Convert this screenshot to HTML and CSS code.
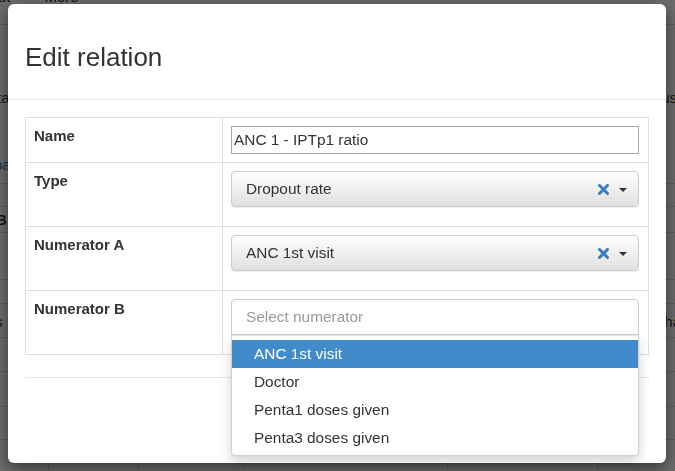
FILE: index.html
```html
<!DOCTYPE html>
<html lang="en">
<head>
<meta charset="utf-8">
<title>Edit relation</title>
<link rel="stylesheet" href="styles.css">
</head>
<body>
<div class="page">
  <div class="bg-row r0"><span class="bg-txt">ut</span><span class="bg-txt more">More</span></div>
  <div class="bg-row r1">
    <div class="bg-line l1"><span class="bg-txt">ta</span><span class="bg-txt">us</span></div>
    <div class="bg-line l2"><span class="bg-txt link">pa</span></div>
  </div>
  <div class="bg-row r2"></div>
  <div class="bg-row r3"><span class="bg-txt bold">B</span></div>
  <div class="bg-row r4"></div>
  <div class="bg-row r5"></div>
  <div class="bg-row r6"><span class="bg-txt">s</span><span class="bg-txt">ha</span></div>
  <div class="bg-row r7"></div>
  <div class="bg-row r8"></div>
  <div class="bg-row r9"></div>
  <div class="bg-row r10"><span class="bg-cell c1"></span><span class="bg-cell c2"></span><span class="bg-cell c3"></span><span class="bg-cell c4"></span><span class="bg-cell c5"></span></div>
</div>
<div class="backdrop"></div>

<div class="modal">
  <div class="modal-header">
    <h4 class="modal-title">Edit relation</h4>
  </div>
  <div class="modal-body">
    <div class="rel-table">
      <div class="cell label">Name</div>
      <div class="cell ctrl"><input class="text-input" type="text" value="ANC 1 - IPTp1 ratio"></div>

      <div class="cell label">Type</div>
      <div class="cell ctrl">
        <div class="select">
          <span class="sel-text">Dropout rate</span>
          <svg class="clear" width="11" height="11" viewBox="0 0 11 11"><path d="M1.5 1.5 L9.5 9.5 M9.5 1.5 L1.5 9.5" stroke="#3b7dc4" stroke-width="3" stroke-linecap="square" fill="none"/></svg>
          <span class="caret"></span>
        </div>
      </div>

      <div class="cell label">Numerator A</div>
      <div class="cell ctrl">
        <div class="select">
          <span class="sel-text">ANC 1st visit</span>
          <svg class="clear" width="11" height="11" viewBox="0 0 11 11"><path d="M1.5 1.5 L9.5 9.5 M9.5 1.5 L1.5 9.5" stroke="#3b7dc4" stroke-width="3" stroke-linecap="square" fill="none"/></svg>
          <span class="caret"></span>
        </div>
      </div>

      <div class="cell label">Numerator B</div>
      <div class="cell ctrl">
        <div class="search-wrap">
          <div class="search">Select numerator</div>
          <ul class="choices">
            <li class="choice active">ANC 1st visit</li>
            <li class="choice">Doctor</li>
            <li class="choice">Penta1 doses given</li>
            <li class="choice">Penta3 doses given</li>
          </ul>
        </div>
      </div>
    </div>
    <div class="modal-footer"></div>
  </div>
</div>
</body>
</html>
```

FILE: styles.css
```css
html, body {
  margin: 0;
  padding: 0;
}
body {
  width: 675px;
  height: 471px;
  overflow: hidden;
  background: #fff;
  color: #333;
  font-family: "Liberation Sans", Arial, sans-serif;
  font-size: 14px;
}

/* background page */
.page {
  width: 675px;
}
.bg-row {
  box-sizing: border-box;
  border-bottom: 1px solid #ddd;
  display: flex;
  justify-content: space-between;
  align-items: flex-start;
}
.bg-txt {
  font-size: 15px;
  line-height: 18px;
}
.bg-txt.more { margin-right: auto; margin-left: 34px; }
.bg-txt.link { color: #337ab7; }
.bg-txt.bold { font-weight: bold; }
.r0 { height: 25px; justify-content: flex-start; }
.r0 .bg-txt { margin-top: -12px; }
.r0 .bg-txt:first-child { margin-left: -2px; }
.r1 { height: 159px; flex-direction: column; justify-content: flex-start; align-items: stretch; }
.bg-line { display: flex; justify-content: space-between; }
.l1 { margin-top: 64px; margin-left: -3px; margin-right: -2px; }
.l2 { margin-top: 49px; margin-left: -6px; }
.r2 { height: 23px; }
.r3 { height: 26px; padding-top: 4px; margin-left: -4px; }
.r4 { height: 47px; }
.r5 { height: 24px; }
.r6 { height: 34px; padding-top: 9px; margin-left: -5px; margin-right: -6px; }
.r7 { height: 34px; }
.r8 { height: 35px; }
.r9 { height: 33px; }
.r10 { height: 31px; justify-content: flex-start; border-bottom: none; }
.bg-cell { height: 31px; border-right: 1px solid #ddd; box-sizing: border-box; }
.c1 { width: 49px; }
.c2 { width: 90px; }
.c3 { width: 106px; }
.c4 { width: 203px; }
.c5 { width: 150px; }

.backdrop {
  position: fixed;
  left: 0;
  top: 0;
  width: 675px;
  height: 471px;
  background: rgba(0, 0, 0, 0.58);
}

/* modal */
.modal {
  position: fixed;
  left: 8px;
  top: 4px;
  width: 658px;
  height: 459px;
  box-sizing: border-box;
  background: #fff;
  border-radius: 6px;
  box-shadow: 0 5px 15px rgba(0, 0, 0, 0.5);
}
.modal-header {
  padding: 39px 17px 27px;
  border-bottom: 1px solid #e5e5e5;
}
.modal-title {
  margin: 0;
  font-size: 26px;
  font-weight: normal;
  line-height: 29px;
  color: #333;
}
.modal-body {
  padding: 17px 17px 0;
}
.rel-table {
  display: grid;
  grid-template-columns: 197px 1fr;
  border-top: 1px solid #ddd;
  border-left: 1px solid #ddd;
}
.cell {
  box-sizing: border-box;
  border-right: 1px solid #ddd;
  border-bottom: 1px solid #ddd;
  padding: 8px 9px 8px 8px;
}
.label {
  font-size: 15px;
  font-weight: bold;
  line-height: 20px;
  color: #333;
}
.text-input {
  display: block;
  box-sizing: border-box;
  width: 100%;
  height: 28px;
  margin: 0;
  padding: 1px 2px;
  border: 1px solid #a9a9a9;
  border-radius: 0;
  font-family: "Liberation Sans", Arial, sans-serif;
  font-size: 15.4px;
  color: #333;
  background: #fff;
}
.select {
  box-sizing: border-box;
  height: 36px;
  margin-bottom: 11px;
  display: flex;
  align-items: center;
  padding: 0 11px 0 14px;
  border: 1px solid #ccc;
  border-radius: 4px;
  background: linear-gradient(to bottom, #ffffff 0%, #e0e0e0 100%);
  box-shadow: inset 0 1px 0 rgba(255, 255, 255, 0.15), 0 1px 1px rgba(0, 0, 0, 0.075);
  font-size: 15.4px;
  color: #333;
}
.sel-text {
  flex: 1;
}
.clear {
  display: block;
  flex: none;
}
.caret {
  flex: none;
  width: 0;
  height: 0;
  margin-left: 10px;
  border-top: 4px solid #333;
  border-left: 4px solid transparent;
  border-right: 4px solid transparent;
  margin-top: 2px;
}
.search-wrap {
  position: relative;
  margin-bottom: 11px;
}
.search {
  box-sizing: border-box;
  height: 36px;
  line-height: 34px;
  padding-left: 14px;
  border: 1px solid #ccc;
  border-radius: 4px 4px 0 0;
  background: #fff;
  color: #999;
  font-size: 15.4px;
}
.choices {
  position: absolute;
  top: 36px;
  left: 0;
  right: 0;
  margin: 0;
  padding: 4px 0 3px;
  list-style: none;
  background: #fff;
  border: 1px solid #d0d0d0;
  border-top: none;
  border-radius: 0 0 4px 4px;
  box-shadow: 0 6px 12px rgba(0, 0, 0, 0.175);
}
.choices::before {
  content: "";
  display: block;
  height: 1px;
  margin-top: -4px;
  margin-bottom: 4px;
  background: #e5e5e5;
}
.choice {
  height: 28px;
  line-height: 28px;
  padding: 0 20px 0 22px;
  font-size: 15.4px;
  color: #333;
}
.choice.active {
  background: #428bca;
  color: #fff;
}
.modal-footer {
  margin-top: 22px;
  border-top: 1px solid #e5e5e5;
}
```
